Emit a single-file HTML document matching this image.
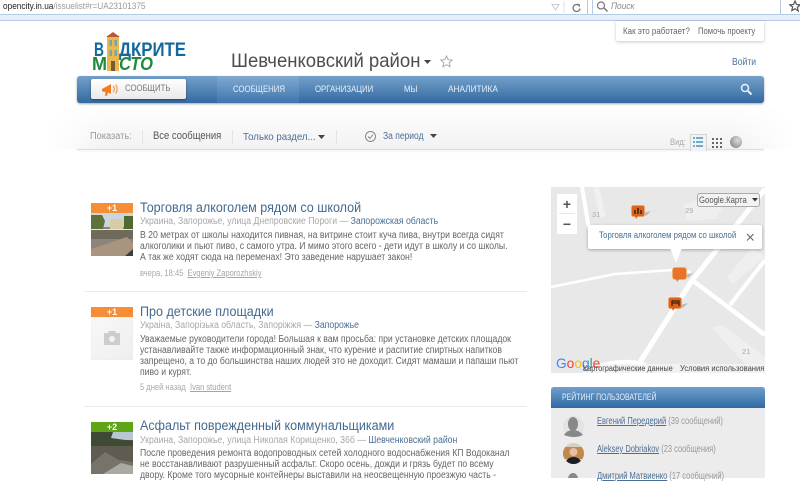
<!DOCTYPE html>
<html><head><meta charset="utf-8">
<style>
html,body{margin:0;padding:0;background:#fff;}
body{width:800px;height:478px;position:relative;overflow:hidden;font-family:"Liberation Sans",sans-serif;color:#555;}
.a{position:absolute;white-space:nowrap;transform-origin:0 50%;}
.t{font-size:13.5px;color:#44698f;line-height:18px;transform:scaleX(.93);}
.l{font-size:10px;color:#a8a8a8;line-height:13px;transform:scaleX(.87);}
.l b{font-weight:normal;color:#4c6f95;}
.b{font-size:10px;color:#666;line-height:13px;transform:scaleX(.865);}
.m{font-size:9px;color:#aaa;line-height:12px;transform:scaleX(.84);}
.m u{color:#a5a5a5;}
.n{font-size:9.5px;color:#e8f0f8;line-height:12px;top:84px;transform:scaleX(.82);}
.s{height:1px;background:#ebebeb;left:84px;width:443px;}
.v{width:42px;height:10px;left:91px;color:#fff;font:bold 9px/10px "Liberation Sans",sans-serif;text-align:center;}
.sep{width:1px;height:14px;top:130px;background:#e4e4e4;}
.r{font-size:10px;line-height:12px;color:#999;left:597px;transform:scaleX(.75);}
.r u{color:#4c6f95;}
</style></head><body>
<!-- browser chrome -->
<div class="a" style="left:0;top:14px;width:800px;height:5px;background:#e6f0fa;border-top:1px solid #b3cbe3;border-bottom:1px solid #b3cbe3;"></div>
<div class="a" style="left:3px;top:1px;font-size:9.5px;line-height:12px;color:#9a9a9a;transform:scaleX(.87);"><span style="color:#222">opencity.in.ua</span>/issuelist#r=UA23101375</div>
<svg class="a" style="left:550px;top:1px" width="40" height="13"><path d="M2 3.500h7l-3.500 5.500z" fill="none" stroke="#c5c9cd"/><path d="M14 0v12" stroke="#dce3ea"/><path d="M29 4.500a3.500 3.500 0 1 0 1 3" fill="none" stroke="#777" stroke-width="1.300"/><path d="M27 2.500l3 1v3z" fill="#777"/></svg>
<div class="a" style="left:587px;top:0;width:1px;height:14px;background:#b3cbe3;"></div>
<div class="a" style="left:592px;top:0;width:187px;height:14px;background:#fff;border:1px solid #b3cbe3;border-top:0;"></div>
<svg class="a" style="left:596px;top:1px" width="14" height="12"><circle cx="5" cy="4.500" r="3.500" fill="none" stroke="#777" stroke-width="1.200"/><path d="M8 7l3.500 3.500" stroke="#777" stroke-width="1.500"/></svg>
<div class="a" style="left:611px;top:1px;font-size:9.5px;line-height:12px;font-style:italic;color:#888;transform:scaleX(.88);">Поиск</div>
<svg class="a" style="left:789px;top:0" width="11" height="13"><path d="M6 1l1.500 3.500 3.700.4-2.800 2.500.8 3.700L6 8.700l-3.200 1.900.8-3.700L.8 4.900l3.700-.4z" fill="none" stroke="#555" stroke-width="1.200"/></svg>
<!-- top right box -->
<div class="a" style="left:616px;top:21px;width:148px;height:20px;background:#fff;box-shadow:0 1px 3px rgba(0,0,0,.22);border-radius:0 0 2px 2px;"></div>
<div class="a" style="left:623px;top:26px;font-size:9.5px;line-height:12px;color:#666;transform:scaleX(.84);">Как это работает?</div>
<div class="a" style="left:698px;top:26px;font-size:9.5px;line-height:12px;color:#666;transform:scaleX(.81);">Помочь проекту</div>
<!-- logo -->
<svg class="a" style="left:92px;top:30px" width="96" height="44">
<rect x="15" y="6" width="12" height="35" fill="#e9b84f"/>
<path d="M14 7l7-5 7 5z" fill="#b8583a"/>
<rect x="17.500" y="10" width="2.500" height="6" fill="#6fa8a8"/><rect x="22.500" y="10" width="2.500" height="6" fill="#6fa8a8"/><rect x="17.500" y="20" width="2.500" height="6" fill="#6fa8a8"/><rect x="22.500" y="20" width="2.500" height="6" fill="#6fa8a8"/><rect x="19" y="31" width="4" height="10" fill="#7d5a34"/>
<text x="2" y="26" font-family="Liberation Sans" font-weight="bold" font-size="19" fill="#14689c" textLength="10" lengthAdjust="spacingAndGlyphs">В</text>
<text x="27" y="26" font-family="Liberation Sans" font-weight="bold" font-size="19" fill="#14689c" textLength="67" lengthAdjust="spacingAndGlyphs">ДКРИТЕ</text>
<text x="0" y="40" font-family="Liberation Sans" font-weight="bold" font-size="18" fill="#1f8a3c" textLength="15" lengthAdjust="spacingAndGlyphs">М</text>
<text x="27" y="40" font-family="Liberation Sans" font-weight="bold" font-style="italic" font-size="18" fill="#1f8a3c" textLength="34" lengthAdjust="spacingAndGlyphs">СТО</text>
</svg>
<div class="a" style="left:231px;top:49px;font-size:19.5px;line-height:24px;color:#4d4d4d;transform:scaleX(.95);">Шевченковский район</div>
<svg class="a" style="left:424px;top:60px" width="8" height="5"><path d="M0 0h7l-3.500 4z" fill="#444"/></svg>
<svg class="a" style="left:440px;top:55px" width="13" height="13"><path d="M6.500 1l1.700 3.700 4 .4-3 2.700.9 4-3.600-2.100-3.600 2.100.9-4-3-2.700 4-.4z" fill="none" stroke="#aaa"/></svg>
<div class="a" style="left:732px;top:57px;font-size:10px;line-height:12px;color:#4c729b;transform:scaleX(.86);">Войти</div>
<!-- filter bar -->
<div class="a" style="left:48px;top:104px;width:745px;height:45px;background:linear-gradient(#fff,#f2f2f2);-webkit-mask-image:linear-gradient(to right,transparent,#000 8%,#000 92%,transparent);mask-image:linear-gradient(to right,transparent,#000 8%,#000 92%,transparent);"></div>
<div class="a" style="left:77px;top:149px;width:687px;height:1px;background:#ddd;box-shadow:0 1px 2px rgba(0,0,0,.1);"></div>
<!-- nav -->
<div class="a" style="left:77px;top:76px;width:687px;height:27px;border-radius:3px;background:linear-gradient(#73a0ca,#346aa1);box-shadow:0 1px 2px rgba(0,0,0,.35);"></div>
<div class="a" style="left:217px;top:76px;width:82px;height:27px;background:linear-gradient(#81a9d0,#3f76ad);"></div>
<div class="a" style="left:91px;top:79px;width:95px;height:20px;border-radius:2px;background:linear-gradient(#fff,#e9e9e9);box-shadow:0 1px 2px rgba(0,0,0,.4);"></div>
<svg class="a" style="left:101px;top:82px" width="20" height="15"><path d="M1 7l9-5v10l-3-1.500-1 3.500-2-.5 .5-3.500-3.500-.5z" fill="#ef7d22"/><path d="M12 4a4 4 0 0 1 0 6M14.500 2.500a7 7 0 0 1 0 9" fill="none" stroke="#ef9a50" stroke-width="1.200"/></svg>
<div class="a" style="left:125px;top:83px;font-size:9.5px;line-height:12px;color:#777;transform:scaleX(.82);">СООБЩИТЬ</div>
<div class="a n" style="left:233px;">СООБЩЕНИЯ</div>
<div class="a n" style="left:315px;">ОРГАНИЗАЦИИ</div>
<div class="a n" style="left:404px;">МЫ</div>
<div class="a n" style="left:448px;transform:scaleX(.87);">АНАЛИТИКА</div>
<svg class="a" style="left:740px;top:83px" width="14" height="13"><circle cx="5" cy="5" r="3.500" fill="none" stroke="#e8f0f8" stroke-width="1.500"/><path d="M8 8l3.500 3.500" stroke="#e8f0f8" stroke-width="2"/></svg>
<!-- filter content -->
<div class="a" style="left:90px;top:131px;font-size:10px;line-height:12px;color:#999;transform:scaleX(.92);">Показать:</div>
<div class="a sep" style="left:142px"></div>
<div class="a" style="left:153px;top:130px;font-size:11px;line-height:13px;color:#555;transform:scaleX(.86);">Все сообщения</div>
<div class="a sep" style="left:232px"></div>
<div class="a" style="left:243px;top:131px;font-size:10.5px;line-height:13px;color:#4c6f95;transform:scaleX(.92);">Только раздел...</div>
<svg class="a" style="left:318px;top:135px" width="8" height="5"><path d="M0 0h7l-3.500 4z" fill="#444"/></svg>
<div class="a sep" style="left:336px"></div>
<svg class="a" style="left:364px;top:130px" width="13" height="13"><circle cx="6.500" cy="6.500" r="5" fill="none" stroke="#888"/><path d="M4 6.500l2 2 3-4" fill="none" stroke="#888"/></svg>
<div class="a" style="left:383px;top:130px;font-size:10px;line-height:13px;color:#4c6f95;transform:scaleX(.85);">За период</div>
<svg class="a" style="left:430px;top:134px" width="8" height="5"><path d="M0 0h7l-3.500 4z" fill="#444"/></svg>
<div class="a" style="left:670px;top:137px;font-size:9.5px;line-height:12px;color:#aaa;transform:scaleX(.8);">Вид:</div>
<div class="a" style="left:690px;top:134px;width:15px;height:16px;background:#edf3f8;border:1px solid #d5d5d5;border-bottom:0;"></div>
<svg class="a" style="left:693px;top:137px" width="10" height="11"><path d="M0 1h2M3 1h7M0 5h2M3 5h7M0 9h2M3 9h7" stroke="#2f7fa8" stroke-width="1.300"/></svg>
<svg class="a" style="left:712px;top:138px" width="10" height="10" fill="#666"><rect x="0" y="0" width="2" height="2"/><rect x="4" y="0" width="2" height="2"/><rect x="8" y="0" width="2" height="2"/><rect x="0" y="4" width="2" height="2"/><rect x="4" y="4" width="2" height="2"/><rect x="8" y="4" width="2" height="2"/><rect x="0" y="8" width="2" height="2"/><rect x="4" y="8" width="2" height="2"/><rect x="8" y="8" width="2" height="2"/></svg>
<div class="a" style="left:730px;top:136px;width:12px;height:12px;border-radius:50%;background:radial-gradient(circle at 65% 35%,#ddd,#777);"></div>
<!-- item 1 -->
<div class="a v" style="top:203px;background:#f68e36;">+1</div>
<svg class="a" style="left:91px;top:213px" width="42" height="43"><rect width="42" height="43" fill="#8d8579"/><rect width="42" height="14" fill="#c9d6de"/><rect x="19" y="6" width="13" height="11" fill="#d8cba8"/><path d="M0 2h11l3 6-2 8H0z" fill="#5f7338"/><path d="M33 3h9v14h-9z" fill="#4f6a30"/><rect y="16" width="42" height="1" fill="#e4e4e4"/><path d="M0 17h42v9H0z" fill="#6e6a5c"/><path d="M0 36L36 24 42 30V43H0z" fill="#a8947f"/><path d="M34 43l8-7v7z" fill="#3e3e36"/></svg>
<div class="a t" style="left:140px;top:199px;">Торговля алкоголем рядом со школой</div>
<div class="a l" style="left:140px;top:215px;">Украина, Запорожье, улица Днепровские Пороги — <b>Запорожская область</b></div>
<div class="a b" style="left:140px;top:229px;">В 20 метрах от школы находится пивная, на витрине стоит куча пива, внутри всегда сидят</div>
<div class="a b" style="left:140px;top:240px;">алкоголики и пьют пиво, с самого утра. И мимо этого всего - дети идут в школу и со школы.</div>
<div class="a b" style="left:140px;top:251px;">А так же ходят сюда на переменах! Это заведение нарушает закон!</div>
<div class="a m" style="left:140px;top:267px;">вчера, 18:45 &nbsp;<u>Evgeniy Zaporozhskiy</u></div>
<div class="a s" style="top:291px;"></div>
<!-- item 2 -->
<div class="a v" style="top:307px;background:#f68e36;">+1</div>
<div class="a" style="left:91px;top:317px;width:42px;height:43px;background:linear-gradient(135deg,#f8f8f8,#eee);box-shadow:inset 0 0 1px #ddd;"></div>
<svg class="a" style="left:103px;top:330px" width="18" height="16"><path d="M1 3h4l1-2h6l1 2h4v12H1z" fill="#ccc"/><circle cx="9" cy="9" r="3" fill="#f3f3f3"/></svg>
<div class="a t" style="left:140px;top:303px;">Про детские площадки</div>
<div class="a l" style="left:140px;top:319px;">Украіна, Запорізька область, Запоріжжя — <b>Запорожье</b></div>
<div class="a b" style="left:140px;top:333px;">Уважаемые руководители города! Большая к вам просьба: при установке детских площадок</div>
<div class="a b" style="left:140px;top:344px;">устанавливайте также информационный знак, что курение и распитие спиртных напитков</div>
<div class="a b" style="left:140px;top:355px;">запрещено, а то до большинства наших людей это не доходит. Сидят мамаши и папаши пьют</div>
<div class="a b" style="left:140px;top:366px;">пиво и курят.</div>
<div class="a m" style="left:140px;top:381px;">5 дней назад &nbsp;<u>Ivan student</u></div>
<div class="a s" style="top:406px;"></div>
<!-- item 3 -->
<div class="a v" style="top:422px;background:#5ea416;">+2</div>
<svg class="a" style="left:91px;top:432px" width="42" height="42"><rect width="42" height="42" fill="#5e5b50"/><rect x="20" width="22" height="8" fill="#b9c8d0"/><path d="M0 0h22l-2 6 22 3v5H0z" fill="#3f4a34"/><path d="M0 32L14 20l14 8 14 2v12H0z" fill="#77736a"/><path d="M12 42L30 31l12 3v8z" fill="#aaa9a2"/></svg>
<div class="a t" style="left:140px;top:417px;">Асфальт поврежденный коммунальщиками</div>
<div class="a l" style="left:140px;top:434px;">Украина, Запорожье, улица Николая Корищенко, 36б — <b>Шевченковский район</b></div>
<div class="a b" style="left:140px;top:447px;">После проведения ремонта водопроводных сетей холодного водоснабжения КП Водоканал</div>
<div class="a b" style="left:140px;top:458px;">не восстанавливают разрушенный асфальт. Скоро осень, дожди и грязь будет по всему</div>
<div class="a b" style="left:140px;top:469px;">двору. Кроме того мусорные контейнеры выставили на неосвещенную проезжую часть -</div>
<!-- map -->
<div class="a" style="left:551px;top:187px;width:214px;height:186px;overflow:hidden;background:#e8e8e8;">
<svg width="214" height="186" style="position:absolute;left:0;top:0">
<rect width="214" height="186" fill="#e8e8e8"/>
<path d="M133 18L160 8 175 14 165 32 136 34z" fill="#efefef"/>
<path d="M176 90L201 60 214 70 182 97z" fill="#efefef"/>
<path d="M161 141L171 138 214 170V186L195 178z" fill="#efefef"/>
<path d="M87 178L140 95 200 20 214 2" stroke="#fff" stroke-width="5" fill="none"/>
<path d="M0 100L64 87 121 83 140 85" stroke="#fff" stroke-width="2.500" fill="none"/>
<path d="M141 93L214 148" stroke="#fff" stroke-width="4.500" fill="none"/>
<path d="M179 118L214 73" stroke="#fff" stroke-width="4" fill="none"/>
<path d="M31 0L38 42" stroke="#fff" stroke-width="4" fill="none"/>
<path d="M45 0L52 30" stroke="#f0f0f0" stroke-width="6" fill="none"/>
<path d="M40 182Q70 170 95 178" stroke="#fff" stroke-width="4" fill="none"/>
<text x="41" y="30" font-size="7.500" fill="#aaa" font-family="Liberation Sans">31</text>
<text x="134" y="26" font-size="7.500" fill="#aaa" font-family="Liberation Sans">29</text>
<text x="191" y="167" font-size="7.500" fill="#aaa" font-family="Liberation Sans">21</text>
<path d="M92 26l8-2-5 5z" fill="#bbb"/>
<rect x="80.500" y="18.500" width="13" height="11" rx="2" fill="#d9651c" stroke="#f1a060" stroke-width=".8"/><path d="M84 29h3l-2 3z" fill="#d9651c"/><path d="M84 27v-4M87 27v-6M90 27v-4" stroke="#402010" stroke-width="1.500"/>
<path d="M134 88l8-2-5 5z" fill="#bbb"/>
<rect x="121.500" y="80.500" width="14" height="12" rx="2.500" fill="#e8742a" stroke="#f4ad75" stroke-width=".8"/><path d="M125 92h3l-2 3z" fill="#e8742a"/>
<path d="M129 118l8-2-5 5z" fill="#bbb"/>
<rect x="117.500" y="110.500" width="13" height="11" rx="2" fill="#d9651c" stroke="#f1a060" stroke-width=".8"/><path d="M121 121h3l-2 3z" fill="#d9651c"/><path d="M121 119v-5h7v5M121 116h7" stroke="#402010" stroke-width="1.200" fill="none"/>
</svg>
<div class="a" style="left:6px;top:7px;width:20px;height:40px;background:#fff;"></div>
<div class="a" style="left:6px;top:8px;width:20px;text-align:center;font:bold 14px/18px 'Liberation Sans',sans-serif;color:#555;">+</div>
<div class="a" style="left:8px;top:26px;width:16px;height:1px;background:#e6e6e6;"></div>
<div class="a" style="left:6px;top:28px;width:20px;text-align:center;font:bold 14px/18px 'Liberation Sans',sans-serif;color:#555;">−</div>
<div class="a" style="left:146px;top:6px;width:61px;height:12px;background:#f3f3f3;border:1px solid #aaa;border-radius:3px;"></div>
<div class="a" style="left:148px;top:7px;font-size:9px;line-height:12px;color:#555;transform:scaleX(.86);">Google.Карта</div>
<svg class="a" style="left:201px;top:11px" width="6" height="4"><path d="M0 0h6l-3 3.500z" fill="#333"/></svg>
<div class="a" style="left:37px;top:38px;width:174px;height:24px;background:#fff;border-radius:2px;box-shadow:0 1px 3px rgba(0,0,0,.3);"></div>
<svg class="a" style="left:119px;top:61px" width="12" height="15"><path d="M0 0h12L6 15z" fill="#fff"/></svg>
<div class="a" style="left:48px;top:43px;font-size:9.5px;line-height:12px;color:#4c6f95;transform:scaleX(.82);">Торговля алкоголем рядом со школой</div>
<svg class="a" style="left:195px;top:46px" width="9" height="9"><path d="M1 1l6.500 6.500M7.500 1L1 7.500" stroke="#666" stroke-width="1.100"/></svg>
<div class="a" style="left:32px;top:177px;width:182px;height:9px;background:rgba(245,245,245,.7);"></div>
<div class="a" style="left:5px;top:168px;font:14px/16px 'Liberation Sans',sans-serif;transform:scaleX(.98);"><span style="color:#4285f4">G</span><span style="color:#ea4335">o</span><span style="color:#fbbc05">o</span><span style="color:#4285f4">g</span><span style="color:#34a853">l</span><span style="color:#ea4335">e</span></div>
<div class="a" style="left:32px;top:177px;font-size:8px;line-height:10px;color:#444;transform:scaleX(.9);">Картографические данные</div>
<div class="a" style="left:129px;top:177px;font-size:8px;line-height:10px;color:#444;transform:scaleX(.95);">Условия использования</div>
</div>
<!-- rating -->
<div class="a" style="left:551px;top:387px;width:214px;height:91px;background:#ececec;"></div>
<div class="a" style="left:551px;top:387px;width:214px;height:21px;background:linear-gradient(#6f9fcd,#2f6aa3);border-radius:3px 3px 0 0;"></div>
<div class="a" style="left:562px;top:392px;font-size:9.5px;line-height:12px;color:#e8f0f8;transform:scaleX(.73);">РЕЙТИНГ ПОЛЬЗОВАТЕЛЕЙ</div>
<svg class="a" style="left:563px;top:416px" width="21" height="21"><circle cx="10.500" cy="10.500" r="10.500" fill="#e3e3e3"/><ellipse cx="10" cy="8" rx="5" ry="7" fill="#888"/><path d="M1 19q3-5 9-5t10 5q-4 2-9 2t-10-2z" fill="#888"/></svg>
<div class="a r" style="top:416px;"><u>Евгений Передерий</u> (39 сообщений)</div>
<svg class="a" style="left:563px;top:443px" width="21" height="21"><defs><clipPath id="c"><circle cx="10.500" cy="10.500" r="10.500"/></clipPath></defs><g clip-path="url(#c)"><rect width="21" height="21" fill="#d9cfc0"/><rect y="4" width="21" height="12" fill="#c08a4e"/><circle cx="10.500" cy="9" r="4" fill="#e7bfa5"/><path d="M2 21q2-7 8.500-7T19 21z" fill="#1d1d25"/></g></svg>
<div class="a r" style="top:444px;"><u>Aleksey Dobriakov</u> (23 сообщения)</div>
<svg class="a" style="left:563px;top:472px" width="21" height="6"><ellipse cx="10" cy="7" rx="5" ry="6" fill="#888"/></svg>
<div class="a r" style="top:471px;"><u>Дмитрий Матвиенко</u> (17 сообщений)</div>
</body></html>
